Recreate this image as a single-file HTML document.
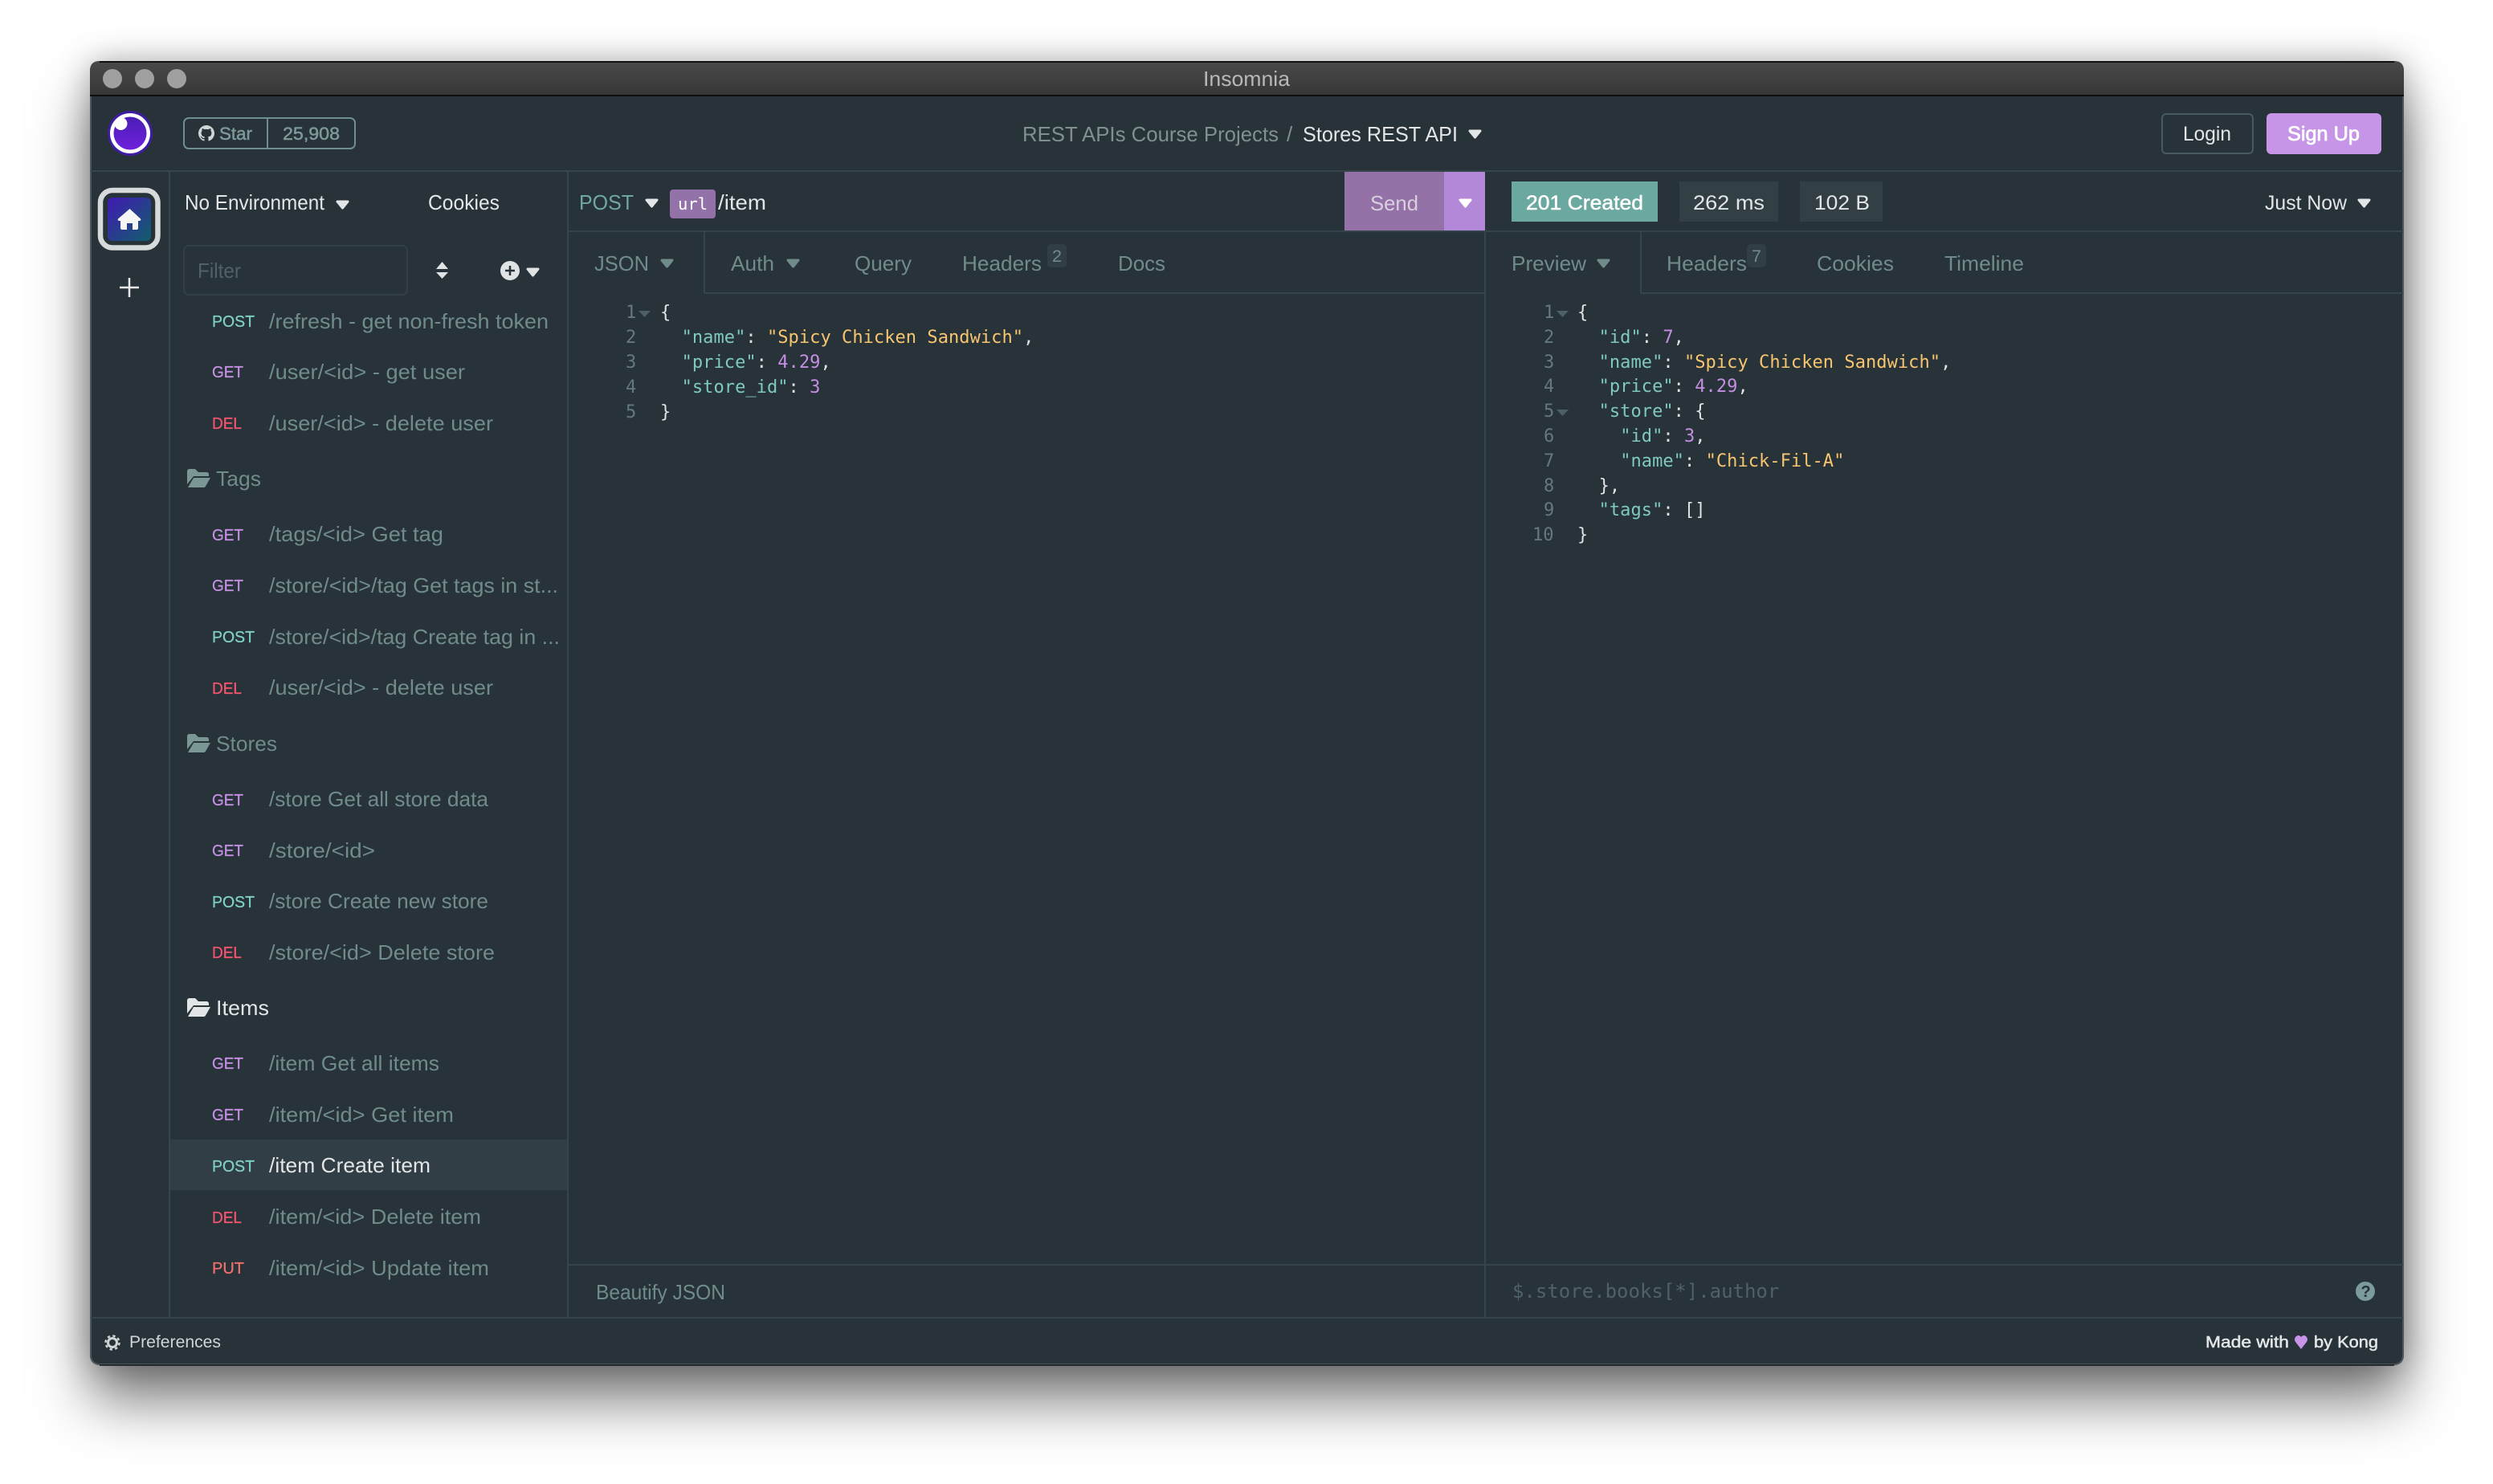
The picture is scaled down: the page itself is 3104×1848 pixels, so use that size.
<!DOCTYPE html>
<html><head><meta charset="utf-8"><title>Insomnia</title>
<style>
html,body{margin:0;padding:0;background:#fff;width:3104px;height:1848px;overflow:hidden}
#win{position:absolute;left:112px;top:76px;width:2881px;height:1624px;border-radius:12px;background:#283239;box-shadow:0 44px 70px rgba(0,0,0,.52),0 0 40px rgba(0,0,0,.28)}
svg{position:absolute;left:0;top:0}
text{font-family:"Liberation Sans",sans-serif;font-size:26px;white-space:pre}
.i{fill:#6f8c8b}.w{fill:#e3e6e6}
.m{font-size:20px;stroke-width:.3px}.po{fill:#7fd0c4;stroke:#7fd0c4}.ge{fill:#c48fe2;stroke:#c48fe2}.de{fill:#f2546f;stroke:#f2546f}.pu{fill:#f0716c;stroke:#f0716c}
.c{font-family:"DejaVu Sans Mono",monospace;font-size:22px;fill:#dfe3e3;letter-spacing:.05px}
.k{fill:#7fc9bd}.s{fill:#f7c56f}.n{fill:#c48fe2}
.g{font-family:"DejaVu Sans Mono",monospace;font-size:22px;fill:#64797c}
.l{stroke:#36444b;stroke-width:2;fill:none}
</style></head><body>
<div id="win"></div>
<svg width="3104" height="1848" viewBox="0 0 3104 1848" xmlns="http://www.w3.org/2000/svg">
<defs>
<linearGradient id="tb" x1="0" y1="0" x2="0" y2="1"><stop offset="0" stop-color="#4a4a4a"/><stop offset="1" stop-color="#363636"/></linearGradient>
<linearGradient id="lg" x1="0" y1="0" x2="0" y2="1"><stop offset="0" stop-color="#4a1eb4"/><stop offset="1" stop-color="#6f20dc"/></linearGradient>
<linearGradient id="hm" x1="0" y1="0" x2="1" y2="1"><stop offset="0" stop-color="#4119b4"/><stop offset="1" stop-color="#125f6c"/></linearGradient>
<path id="fo" d="M233 587q0-3 3-3h7l4 4h10q3 0 3 3v2H241l-8 10zM241 595h21l-6 10.500q-.7 1.500-2 1.500H234z"/>
<polygon id="cr" points="0,0 13,0 6.500,8" stroke-width="3" stroke-linejoin="round"/>
</defs>

<!-- window frame -->
<path d="M112 120V88q0-12 12-12H2981q12 0 12 12V120z" fill="url(#tb)"/>
<path d="M124 77H2981" stroke="#111" stroke-width="2"/>
<path d="M112 119H2993" stroke="#0e0e0e" stroke-width="2"/>
<path d="M113 120V1687q0 12 12 12H2980q12 0 12-12V120" fill="none" stroke="#4a565c" stroke-width="2"/>
<path d="M124 1700H2981" stroke="#111" stroke-width="1.500"/>
<circle cx="140" cy="98" r="12" fill="#a0a0a0"/><circle cx="180" cy="98" r="12" fill="#a0a0a0"/><circle cx="220" cy="98" r="12" fill="#a0a0a0"/>
<text x="1498" y="107" textLength="108" lengthAdjust="spacingAndGlyphs" fill="#b8b8b8">Insomnia</text>

<!-- lines -->
<path class="l" d="M113 213H2992M113 1641H2992M211 213V1641M707 213V1641M1849 288V1641M707 288H2992M877 365H1849M2043 365H2992M877 288V365M2043 288V365M707 1575H2992"/>
<rect x="212" y="1419" width="494" height="63" fill="#323e45"/>

<!-- header -->
<circle cx="162" cy="166" r="28" fill="#3f1ca6"/><circle cx="162" cy="166" r="25" fill="#fff"/><circle cx="162" cy="166" r="20.500" fill="url(#lg)"/><circle cx="150.500" cy="154" r="8" fill="#fff"/>
<rect x="229" y="147" width="213" height="38" rx="6" fill="none" stroke="#6f8f8e" stroke-width="2"/><path d="M333 147V185" stroke="#6f8f8e" stroke-width="2"/>
<g transform="translate(247 156) scale(1.25)" fill="#cfd6d6"><path d="M8 0C3.580 0 0 3.580 0 8c0 3.540 2.290 6.530 5.470 7.590.4.070.55-.17.55-.38 0-.19-.01-.82-.01-1.490-2.010.37-2.530-.49-2.690-.94-.09-.23-.48-.94-.82-1.130-.28-.15-.68-.52-.01-.53.63-.01 1.080.58 1.230.82.72 1.210 1.870.87 2.330.66.070-.52.28-.87.51-1.070-1.780-.2-3.640-.89-3.640-3.950 0-.87.31-1.590.82-2.150-.08-.2-.36-1.020.08-2.120 0 0 .67-.21 2.200.82.64-.18 1.320-.27 2-.27.68 0 1.360.09 2 .27 1.530-1.040 2.200-.82 2.200-.82.44 1.100.16 1.920.08 2.120.51.56.82 1.270.82 2.150 0 3.070-1.870 3.750-3.650 3.950.29.25.54.73.54 1.480 0 1.070-.01 1.930-.01 2.200 0 .21.15.46.55.38A8.013 8.013 0 0016 8c0-4.420-3.580-8-8-8z"/></g>
<text x="273" y="174" style="font-size:22px;stroke:#7d9a99;stroke-width:.5px" textLength="41" lengthAdjust="spacingAndGlyphs" fill="#7d9a99">Star</text>
<text x="352" y="174" style="font-size:22px;stroke:#7d9a99;stroke-width:.5px" textLength="71" lengthAdjust="spacingAndGlyphs" fill="#7d9a99">25,908</text>
<text x="1273" y="176" textLength="319" lengthAdjust="spacingAndGlyphs" style="fill:#80908f">REST APIs Course Projects</text>
<text x="1602" y="176" style="fill:#80908f">/</text>
<text x="1622" y="176" textLength="193" lengthAdjust="spacingAndGlyphs" class="w">Stores REST API</text>
<use href="#cr" x="1830" y="163" fill="#e3e6e6" stroke="#e3e6e6"/>
<rect x="2692" y="142" width="113" height="49" rx="5" fill="none" stroke="#465a5f" stroke-width="2"/>
<text x="2718" y="175" textLength="60" lengthAdjust="spacingAndGlyphs" style="font-size:25px" class="w">Login</text>
<rect x="2822" y="141" width="143" height="51" rx="6" fill="#c795e8"/>
<text x="2848" y="175" textLength="90" lengthAdjust="spacingAndGlyphs" style="font-size:25px;stroke:#fff;stroke-width:.7px" fill="#fff">Sign Up</text>

<!-- sidebar left -->
<rect x="125" y="237" width="71.500" height="71.500" rx="15" fill="none" stroke="#d6dada" stroke-width="6.500"/>
<rect x="134" y="246" width="54" height="54" rx="6" fill="url(#hm)"/>
<path d="M161.500 260L175 272.500Q176 274.500 174 275H172V284Q172 286 170 286H165V278H158V286H152.500Q150 286 150 284V275H148Q146 274.500 147 272.500Z" fill="#f5f6f6"/>
<path d="M161 346V370M149 358H173" stroke="#e6e9e9" stroke-width="2.500" fill="none"/>

<!-- sidebar -->
<text x="230" y="261" textLength="174" lengthAdjust="spacingAndGlyphs" class="w">No Environment</text>
<use href="#cr" x="420" y="251" fill="#e3e6e6" stroke="#e3e6e6"/>
<text x="533" y="261" textLength="89" lengthAdjust="spacingAndGlyphs" class="w">Cookies</text>
<rect x="229" y="306" width="278" height="61" rx="6" fill="none" stroke="#323e45" stroke-width="2"/>
<text x="246" y="346" textLength="54" lengthAdjust="spacingAndGlyphs" fill="#4f6266">Filter</text>
<path d="M550.500 326L558 335H543ZM550.500 347L558 339H543Z" fill="#dfe3e3"/>
<circle cx="635" cy="337" r="12" fill="#dfe3e3"/><path d="M629 337H641M635 331V343" stroke="#283239" stroke-width="2.500"/>
<use href="#cr" x="657" y="335" fill="#dfe3e3" stroke="#dfe3e3"/>

<g>
<text x="264" y="407" class="m po" textLength="53" lengthAdjust="spacingAndGlyphs">POST</text><text x="335" y="409" class="i" textLength="348" lengthAdjust="spacingAndGlyphs">/refresh - get non-fresh token</text>
<text x="264" y="470" class="m ge" textLength="39" lengthAdjust="spacingAndGlyphs">GET</text><text x="335" y="472" class="i" textLength="244" lengthAdjust="spacingAndGlyphs">/user/&lt;id&gt; - get user</text>
<text x="264" y="534" class="m de" textLength="37" lengthAdjust="spacingAndGlyphs">DEL</text><text x="335" y="536" class="i" textLength="279" lengthAdjust="spacingAndGlyphs">/user/&lt;id&gt; - delete user</text>

<use href="#fo" fill="#7a9695"/>
<text x="269" y="605" class="i" textLength="56" lengthAdjust="spacingAndGlyphs">Tags</text>
<text x="264" y="673" class="m ge" textLength="39" lengthAdjust="spacingAndGlyphs">GET</text><text x="335" y="674" class="i" textLength="217" lengthAdjust="spacingAndGlyphs">/tags/&lt;id&gt; Get tag</text>
<text x="264" y="736" class="m ge" textLength="39" lengthAdjust="spacingAndGlyphs">GET</text><text x="335" y="738" class="i" textLength="360" lengthAdjust="spacingAndGlyphs">/store/&lt;id&gt;/tag Get tags in st...</text>
<text x="264" y="800" class="m po" textLength="53" lengthAdjust="spacingAndGlyphs">POST</text><text x="335" y="802" class="i" textLength="362" lengthAdjust="spacingAndGlyphs">/store/&lt;id&gt;/tag Create tag in ...</text>
<text x="264" y="864" class="m de" textLength="37" lengthAdjust="spacingAndGlyphs">DEL</text><text x="335" y="865" class="i" textLength="279" lengthAdjust="spacingAndGlyphs">/user/&lt;id&gt; - delete user</text>

<use href="#fo" y="330" fill="#7a9695"/>
<text x="269" y="935" class="i" textLength="76" lengthAdjust="spacingAndGlyphs">Stores</text>
<text x="264" y="1003" class="m ge" textLength="39" lengthAdjust="spacingAndGlyphs">GET</text><text x="335" y="1004" class="i" textLength="273" lengthAdjust="spacingAndGlyphs">/store Get all store data</text>
<text x="264" y="1066" class="m ge" textLength="39" lengthAdjust="spacingAndGlyphs">GET</text><text x="335" y="1068" class="i" textLength="132" lengthAdjust="spacingAndGlyphs">/store/&lt;id&gt;</text>
<text x="264" y="1130" class="m po" textLength="53" lengthAdjust="spacingAndGlyphs">POST</text><text x="335" y="1131" class="i" textLength="273" lengthAdjust="spacingAndGlyphs">/store Create new store</text>
<text x="264" y="1193" class="m de" textLength="37" lengthAdjust="spacingAndGlyphs">DEL</text><text x="335" y="1195" class="i" textLength="281" lengthAdjust="spacingAndGlyphs">/store/&lt;id&gt; Delete store</text>

<use href="#fo" y="659" fill="#e3e6e6"/>
<text x="269" y="1264" class="w" textLength="66" lengthAdjust="spacingAndGlyphs">Items</text>
<text x="264" y="1331" class="m ge" textLength="39" lengthAdjust="spacingAndGlyphs">GET</text><text x="335" y="1333" class="i" textLength="212" lengthAdjust="spacingAndGlyphs">/item Get all items</text>
<text x="264" y="1395" class="m ge" textLength="39" lengthAdjust="spacingAndGlyphs">GET</text><text x="335" y="1397" class="i" textLength="230" lengthAdjust="spacingAndGlyphs">/item/&lt;id&gt; Get item</text>
<text x="264" y="1459" class="m po" textLength="53" lengthAdjust="spacingAndGlyphs">POST</text><text x="335" y="1460" class="w" textLength="201" lengthAdjust="spacingAndGlyphs">/item Create item</text>
<text x="264" y="1523" class="m de" textLength="37" lengthAdjust="spacingAndGlyphs">DEL</text><text x="335" y="1524" class="i" textLength="264" lengthAdjust="spacingAndGlyphs">/item/&lt;id&gt; Delete item</text>
<text x="264" y="1586" class="m pu" textLength="40" lengthAdjust="spacingAndGlyphs">PUT</text><text x="335" y="1588" class="i" textLength="274" lengthAdjust="spacingAndGlyphs">/item/&lt;id&gt; Update item</text>
</g>

<!-- url bar -->
<text x="721" y="261" textLength="68" lengthAdjust="spacingAndGlyphs" style="fill:#6fa8a0">POST</text>
<use href="#cr" x="805" y="249" fill="#e3e6e6" stroke="#e3e6e6"/>
<rect x="834" y="236" width="57" height="36" rx="4" fill="#9272a8"/>
<text x="844" y="261" class="c" style="font-size:20.500px;fill:#fff">url</text>
<text x="894" y="261" textLength="60" lengthAdjust="spacingAndGlyphs" class="w">/item</text>
<rect x="1674" y="214" width="124" height="73" fill="#9472a8"/>
<rect x="1798" y="214" width="51" height="73" fill="#b488d8"/>
<text x="1706" y="262" textLength="60" lengthAdjust="spacingAndGlyphs" fill="#d8d0de">Send</text>
<use href="#cr" x="1818" y="249" fill="#fff" stroke="#fff"/>

<!-- request tabs -->
<text x="740" y="337" textLength="68" lengthAdjust="spacingAndGlyphs" class="i">JSON</text><use href="#cr" x="824" y="324" fill="#6f8c8b" stroke="#6f8c8b"/>
<text x="910" y="337" textLength="54" lengthAdjust="spacingAndGlyphs" class="i">Auth</text><use href="#cr" x="981" y="324" fill="#6f8c8b" stroke="#6f8c8b"/>
<text x="1064" y="337" textLength="71" lengthAdjust="spacingAndGlyphs" class="i">Query</text>
<text x="1198" y="337" textLength="99" lengthAdjust="spacingAndGlyphs" class="i">Headers</text>
<rect x="1304" y="304" width="24" height="29" rx="5" fill="#323e45"/>
<text x="1310" y="326" textLength="12" lengthAdjust="spacingAndGlyphs" class="i" style="font-size:21px">2</text>
<text x="1392" y="337" textLength="59" lengthAdjust="spacingAndGlyphs" class="i">Docs</text>

<!-- request body -->
<text class="g" x="779" y="396">1</text><text class="g" x="779" y="427">2</text><text class="g" x="779" y="458">3</text><text class="g" x="779" y="489">4</text><text class="g" x="779" y="520">5</text>
<polygon points="795,387 810,387 802.500,395" fill="#4d6064"/>
<text class="c" x="822" y="396">{</text>
<text class="c" x="822" y="427">  <tspan class="k">"name"</tspan>: <tspan class="s">"Spicy Chicken Sandwich"</tspan>,</text>
<text class="c" x="822" y="458">  <tspan class="k">"price"</tspan>: <tspan class="n">4.29</tspan>,</text>
<text class="c" x="822" y="489">  <tspan class="k">"store_id"</tspan>: <tspan class="n">3</tspan></text>
<text class="c" x="822" y="520">}</text>

<!-- status -->
<rect x="1882" y="226" width="182" height="50" fill="#6ba8a0"/>
<text x="1900" y="261" textLength="146" lengthAdjust="spacingAndGlyphs" fill="#fff" style="font-size:25px;stroke:#fff;stroke-width:.5px">201 Created</text>
<rect x="2091" y="226" width="123" height="50" fill="#323f45"/>
<text x="2108" y="261" textLength="89" lengthAdjust="spacingAndGlyphs" fill="#e3e6e6" style="font-size:25px">262 ms</text>
<rect x="2241" y="226" width="103" height="50" fill="#323f45"/>
<text x="2259" y="261" textLength="69" lengthAdjust="spacingAndGlyphs" fill="#e3e6e6" style="font-size:25px">102 B</text>
<text x="2820" y="261" textLength="102" lengthAdjust="spacingAndGlyphs" class="w" style="font-size:25px">Just Now</text>
<use href="#cr" x="2937" y="249" fill="#e3e6e6" stroke="#e3e6e6"/>

<!-- response tabs -->
<text x="1882" y="337" textLength="93" lengthAdjust="spacingAndGlyphs" class="i">Preview</text><use href="#cr" x="1990" y="324" fill="#6f8c8b" stroke="#6f8c8b"/>
<text x="2075" y="337" textLength="100" lengthAdjust="spacingAndGlyphs" class="i">Headers</text>
<rect x="2175" y="304" width="24" height="29" rx="5" fill="#323e45"/>
<text x="2181" y="326" textLength="12" lengthAdjust="spacingAndGlyphs" class="i" style="font-size:21px">7</text>
<text x="2262" y="337" textLength="96" lengthAdjust="spacingAndGlyphs" class="i">Cookies</text>
<text x="2421" y="337" textLength="99" lengthAdjust="spacingAndGlyphs" class="i">Timeline</text>

<!-- response body -->
<text class="g" x="1922" y="396">1</text><text class="g" x="1922" y="427">2</text><text class="g" x="1922" y="458">3</text><text class="g" x="1922" y="488">4</text><text class="g" x="1922" y="519">5</text><text class="g" x="1922" y="550">6</text><text class="g" x="1922" y="581">7</text><text class="g" x="1922" y="612">8</text><text class="g" x="1922" y="642">9</text><text class="g" x="1908" y="673">10</text>
<polygon points="1938,387 1953,387 1945.500,395" fill="#4d6064"/><polygon points="1938,510 1953,510 1945.500,518" fill="#4d6064"/>
<text class="c" x="1964" y="396">{</text>
<text class="c" x="1964" y="427">  <tspan class="k">"id"</tspan>: <tspan class="n">7</tspan>,</text>
<text class="c" x="1964" y="458">  <tspan class="k">"name"</tspan>: <tspan class="s">"Spicy Chicken Sandwich"</tspan>,</text>
<text class="c" x="1964" y="488">  <tspan class="k">"price"</tspan>: <tspan class="n">4.29</tspan>,</text>
<text class="c" x="1964" y="519">  <tspan class="k">"store"</tspan>: {</text>
<text class="c" x="1964" y="550">    <tspan class="k">"id"</tspan>: <tspan class="n">3</tspan>,</text>
<text class="c" x="1964" y="581">    <tspan class="k">"name"</tspan>: <tspan class="s">"Chick-Fil-A"</tspan></text>
<text class="c" x="1964" y="612">  },</text>
<text class="c" x="1964" y="642">  <tspan class="k">"tags"</tspan>: []</text>
<text class="c" x="1964" y="673">}</text>

<!-- footers -->
<text x="742" y="1618" textLength="161" lengthAdjust="spacingAndGlyphs" class="i">Beautify JSON</text>
<text class="g" x="1883" y="1616" style="font-size:24px;fill:#4f6266">$.store.books[*].author</text>
<circle cx="2945" cy="1608" r="12" fill="#7b9a9a"/>
<text x="2939.500" y="1615" fill="#283239" style="font-size:20px;font-weight:bold">?</text>

<circle cx="140" cy="1672" r="5.500" fill="none" stroke="#cfd5d5" stroke-width="3"/>
<circle cx="140" cy="1672" r="8.500" fill="none" stroke="#cfd5d5" stroke-width="2.500" stroke-dasharray="3.340 3.340"/>
<text x="161" y="1678" textLength="114" lengthAdjust="spacingAndGlyphs" style="font-size:21px;fill:#cfd5d5">Preferences</text>
<text x="2746" y="1678" textLength="104" lengthAdjust="spacingAndGlyphs" class="w" style="font-size:20px;stroke:#e3e6e6;stroke-width:.5px">Made with</text>
<path d="M2865 1680L2858 1671Q2856 1668 2858 1665Q2862 1661 2865 1665Q2868.500 1661 2872 1665Q2874 1668 2872 1671Z" fill="#c795e8"/>
<text x="2881" y="1678" textLength="80" lengthAdjust="spacingAndGlyphs" class="w" style="font-size:20px;stroke:#e3e6e6;stroke-width:.5px">by Kong</text>
</svg>
</body></html>
